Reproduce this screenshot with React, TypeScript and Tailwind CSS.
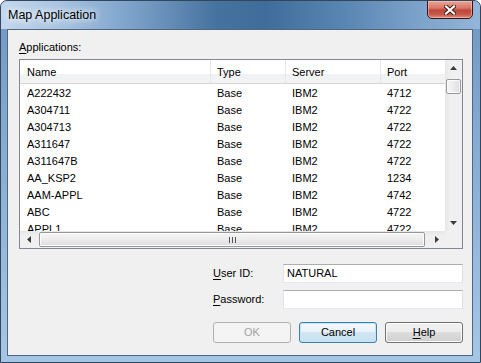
import React from 'react';

const rows = [
  ['A222432', 'Base', 'IBM2', '4712'],
  ['A304711', 'Base', 'IBM2', '4722'],
  ['A304713', 'Base', 'IBM2', '4722'],
  ['A311647', 'Base', 'IBM2', '4722'],
  ['A311647B', 'Base', 'IBM2', '4722'],
  ['AA_KSP2', 'Base', 'IBM2', '1234'],
  ['AAM-APPL', 'Base', 'IBM2', '4742'],
  ['ABC', 'Base', 'IBM2', '4722'],
  ['APPL1', 'Base', 'IBM2', '4722'],
];

const cols = [
  { name: 'Name', w: 'w-[190px]' },
  { name: 'Type', w: 'w-[75px]' },
  { name: 'Server', w: 'w-[95px]' },
  { name: 'Port', w: 'w-[80px]' },
];

const Arrow = ({ dir }: { dir: 'up' | 'down' | 'left' | 'right' }) => {
  const pts = {
    up: '0,4 7,4 3.5,0',
    down: '0,0 7,0 3.5,4',
    left: '4,0 4,7 0,3.5',
    right: '0,0 0,7 4,3.5',
  }[dir];
  const vert = dir === 'up' || dir === 'down';
  return (
    <svg width={vert ? 7 : 4} height={vert ? 4 : 7} viewBox={vert ? '0 0 7 4' : '0 0 4 7'}>
      <polygon points={pts} fill="#3c3c3c" />
    </svg>
  );
};

const Button = ({ children, kind }: { children: React.ReactNode; kind: 'disabled' | 'default' | 'normal' }) => {
  const styles = {
    disabled: 'border-[#adb2b5] bg-[#f4f4f4] text-[#a0a0a0]',
    default: 'border-[#3c7fb1] bg-[linear-gradient(180deg,#f4f9fc_0%,#e8f2f9_50%,#d2e6f3_50%,#c8e0f0_100%)] text-black shadow-[inset_0_0_0_1px_#c4e5f6]',
    normal: 'border-[#707070] bg-[linear-gradient(180deg,#f2f2f2_0%,#ebebeb_50%,#dddddd_50%,#cfcfcf_100%)] text-black shadow-[inset_0_0_0_1px_#fcfcfc]',
  }[kind];
  return (
    <div className={`w-[78px] h-[21px] rounded-[3px] border flex items-center justify-center font-normal ${styles}`}>
      {children}
    </div>
  );
};

export default function App() {
  return (
    <div className="w-[481px] h-[363px] overflow-hidden bg-white font-['Liberation_Sans',Arial,sans-serif] text-[11px] text-black">
      <div className="w-[481px] h-[363px] rounded-t-[7px] border border-[#33465c] bg-[linear-gradient(180deg,#6f97c2_0%,#86acd3_40%,#a6c6e6_100%)] flex flex-col overflow-hidden">
        {/* title bar */}
        <div className="h-[28px] flex items-start justify-between bg-[linear-gradient(90deg,#c3d7ec_0%,#a9c5e2_12%,#7aa0c8_28%,#46729f_45%,#3f6c9a_55%,#5a86b3_72%,#7ea4cb_88%,#93b5d8_100%)]">
          <div className="pl-[7px] pt-[6px] text-[12.5px] leading-[16px] text-black [text-shadow:0_0_6px_#ffffff,0_0_10px_#ffffff]">
            Map Application
          </div>
          <div className="mr-[7px] w-[46px] h-[19px] -mt-px rounded-b-[5px] border border-[#3a1410] bg-[linear-gradient(180deg,#e8a597_0%,#d9786a_40%,#c0463a_55%,#c85a4c_80%,#e09080_100%)] flex items-center justify-center shadow-[inset_0_0_0_1px_rgba(255,210,200,0.5)]">
            <svg width="12" height="10" viewBox="0 0 12 10">
              <path d="M2 1.5 L10 8.5 M10 1.5 L2 8.5" stroke="#3b1a16" strokeWidth="4" strokeLinecap="square" />
              <path d="M2 1.5 L10 8.5 M10 1.5 L2 8.5" stroke="#ffffff" strokeWidth="2.2" strokeLinecap="square" />
            </svg>
          </div>
        </div>

        {/* client area */}
        <div className="ml-[6px] w-[466px] h-[327px] border border-[#52667d] bg-[#f0f0f0] pl-[11px]">
          <div className="pt-[10px] h-[29px] leading-[14px]">
            <span className="underline underline-offset-2">A</span>pplications:
          </div>

          {/* list view */}
          <div className="w-[444px] h-[190px] border border-[#828790] bg-white grid grid-cols-[425px_17px] grid-rows-[171px_17px]">
            <div className="overflow-hidden">
              <div className="flex h-[24px] border-b border-[#d5d5d5] bg-[linear-gradient(180deg,#ffffff_0%,#ffffff_60%,#f1f2f4_60%,#f1f2f4_100%)]">
                {cols.map((c, i) => (
                  <div key={c.name} className={`${c.w} shrink-0 flex items-center pt-px ${i > 0 ? 'border-l border-[#e3e6ea] pl-[6px]' : 'pl-[7px]'}`}>
                    {c.name}
                  </div>
                ))}
              </div>
              <div className="pt-px">
                {rows.map((r) => (
                  <div key={r[0]} className="flex h-[17px] leading-[17px]">
                    {r.map((v, i) => (
                      <div key={i} className={`${cols[i].w} shrink-0 pl-[7px]`}>
                        {v}
                      </div>
                    ))}
                  </div>
                ))}
              </div>
            </div>

            {/* vertical scrollbar */}
            <div className="bg-[linear-gradient(90deg,#e6e6e6_0%,#f0f0f0_30%,#f0f0f0_100%)] flex flex-col items-center">
              <div className="h-[15px] w-full flex items-center justify-center">
                <Arrow dir="up" />
              </div>
              <div className="mt-[4px] w-[15px] h-[15px] rounded-[2px] border border-[#979797] bg-[linear-gradient(90deg,#f6f6f6_0%,#ececec_50%,#dcdcdc_100%)] shadow-[inset_0_0_0_1px_#fbfbfb]" />
              <div className="flex-1" />
              <div className="h-[17px] w-full flex items-center justify-center">
                <Arrow dir="down" />
              </div>
            </div>

            {/* horizontal scrollbar */}
            <div className="bg-[linear-gradient(180deg,#e6e6e6_0%,#f0f0f0_30%,#f0f0f0_100%)] flex items-center">
              <div className="w-[17px] h-full flex items-center justify-center">
                <Arrow dir="left" />
              </div>
              <div className="ml-[2px] w-[386px] h-[15px] rounded-[2px] border border-[#979797] bg-[linear-gradient(180deg,#f6f6f6_0%,#ececec_50%,#dcdcdc_100%)] shadow-[inset_0_0_0_1px_#fbfbfb] flex items-center justify-center gap-[2px]">
                <div className="w-px h-[6px] bg-[#555555]" />
                <div className="w-px h-[6px] bg-[#555555]" />
                <div className="w-px h-[6px] bg-[#555555]" />
              </div>
              <div className="flex-1" />
              <div className="w-[17px] h-full flex items-center justify-center">
                <Arrow dir="right" />
              </div>
            </div>
            <div className="bg-[#f0f0f0]" />
          </div>

          {/* login fields */}
          <div className="ml-[194px] w-[250px] mt-[15px] flex flex-col">
            <div className="flex items-center h-[19px]">
              <div className="w-[70px]">
                <span className="underline underline-offset-2">U</span>ser ID:
              </div>
              <div className="w-[180px] h-[19px] border border-[#abadb3] border-l-[#e2e3ea] border-r-[#dbdfe6] border-b-[#e3e9ef] bg-white pl-[3px] leading-[17px]">
                NATURAL
              </div>
            </div>
            <div className="flex items-center h-[19px] mt-[7px]">
              <div className="w-[70px]">
                <span className="underline underline-offset-2">P</span>assword:
              </div>
              <div className="w-[180px] h-[19px] border border-[#abadb3] border-l-[#e2e3ea] border-r-[#dbdfe6] border-b-[#e3e9ef] bg-white" />
            </div>
            <div className="flex justify-between mt-[13px]">
              <Button kind="disabled">OK</Button>
              <Button kind="default">Cancel</Button>
              <Button kind="normal">
                <span>
                  <span className="underline underline-offset-2">H</span>elp
                </span>
              </Button>
            </div>
          </div>
        </div>
      </div>
    </div>
  );
}
